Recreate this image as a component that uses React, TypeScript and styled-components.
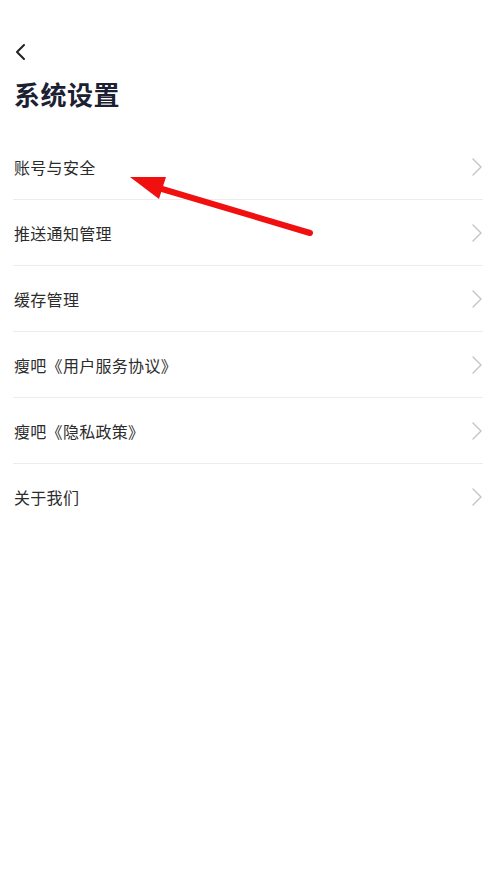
import React from "react";
import styled, { createGlobalStyle } from "styled-components";

const Global = createGlobalStyle`
  html, body { margin: 0; padding: 0; background: #ffffff; }
  body { font-family: "Noto Sans CJK SC", "Noto Sans", sans-serif; }
`;

const Page = styled.div`
  position: relative;
  width: 496px;
  min-height: 881px;
  background: #ffffff;
`;

const Header = styled.header`
  padding: 40px 13px 0 13px;
  display: flex;
  flex-direction: column;
`;

const BackButton = styled.button`
  width: 24px;
  height: 24px;
  padding: 0;
  margin: 0;
  border: none;
  background: transparent;
  display: flex;
  align-items: center;
  justify-content: flex-start;
`;

const Title = styled.h1`
  margin: 12px 0 0 1px;
  font-size: 26px;
  line-height: 36px;
  font-weight: 700;
  color: #1b2033;
  letter-spacing: 0.5px;
`;

const List = styled.ul`
  list-style: none;
  margin: 22px 13px 0 13px;
  padding: 0;
`;

const Row = styled.li<{ $last?: boolean }>`
  height: 65px;
  display: flex;
  align-items: center;
  justify-content: space-between;
  border-bottom: ${(p) => (p.$last ? "none" : "1px solid #ececec")};
`;

const Label = styled.span`
  margin-left: 1px;
  font-size: 16px;
  letter-spacing: 0.3px;
  color: #2c2c2c;
`;

const Chevron = styled.svg`
  width: 12px;
  height: 20px;
`;

const Overlay = styled.svg`
  position: absolute;
  left: 0;
  top: 0;
  pointer-events: none;
`;

const items = [
  "账号与安全",
  "推送通知管理",
  "缓存管理",
  "瘦吧《用户服务协议》",
  "瘦吧《隐私政策》",
  "关于我们",
];

export default function App() {
  return (
    <>
      <Global />
      <Page>
        <Header>
          <BackButton aria-label="返回">
            <svg width="14" height="20" viewBox="0 0 14 20">
              <path d="M11 3 L4 10 L11 17" fill="none" stroke="#222" strokeWidth="2" strokeLinecap="round" strokeLinejoin="round" />
            </svg>
          </BackButton>
          <Title>系统设置</Title>
        </Header>
        <List>
          {items.map((t, i) => (
            <Row key={t} $last={i === items.length - 1}>
              <Label>{t}</Label>
              <Chevron viewBox="0 0 12 20">
                <path d="M2 2 L10 10 L2 18" fill="none" stroke="#c4c4c4" strokeWidth="1.4" strokeLinecap="round" strokeLinejoin="round" />
              </Chevron>
            </Row>
          ))}
        </List>
        <Overlay width="496" height="881" viewBox="0 0 496 881">
          <line x1="310" y1="233" x2="152" y2="186" stroke="#f01010" strokeWidth="6" strokeLinecap="round" />
          <polygon points="130,177 166,177 159,199" fill="#f01010" />
        </Overlay>
      </Page>
    </>
  );
}
